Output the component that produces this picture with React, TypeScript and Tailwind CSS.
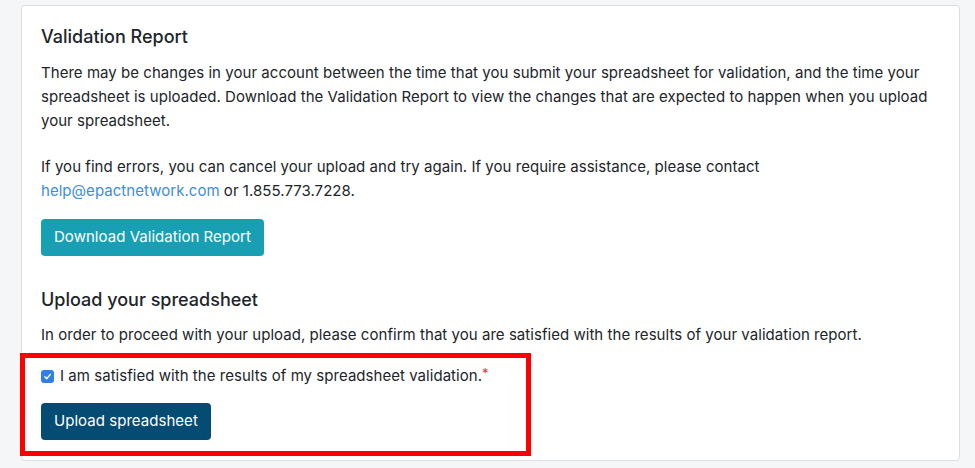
export default function App() {
  return (
    <div className="min-h-[468px] bg-[#f5f6f8] pt-[5px] pl-[21px] pr-[15px] font-['Inter','Liberation_Sans',Arial,sans-serif] text-[#212529]">
      <div className="w-[939px] h-[456px] rounded-[4px] border border-[#dcdee2] bg-white pt-[18px] pl-[19px] pr-[20px]">
        <h3 className="text-[18px] leading-[26px] font-medium">Validation Report</h3>
        <p className="mt-[11px] text-[15px] leading-[24px] tracking-[0.04px]">
          There may be changes in your account between the time that you submit your spreadsheet for validation, and the time your
          spreadsheet is uploaded. Download the Validation Report to view the changes that are expected to happen when you upload
          your spreadsheet.
        </p>
        <p className="mt-[22px] text-[15px] leading-[24px] tracking-[0.04px]">
          If you find errors, you can cancel your upload and try again. If you require assistance, please contact
          <br />
          <a className="text-[#3d8edb]">help@epactnetwork.com</a> or 1.855.773.7228.
        </p>
        <button className="mt-[16px] h-[37px] px-[13px] rounded-[4px] bg-[#189fb4] text-white text-[15px] tracking-[0.04px]">
          Download Validation Report
        </button>
        <h3 className="mt-[31px] text-[18px] leading-[26px] font-medium">Upload your spreadsheet</h3>
        <p className="mt-[10px] text-[15px] leading-[24px] tracking-[0.04px]">
          In order to proceed with your upload, please confirm that you are satisfied with the results of your validation report.
        </p>
        <div className="relative mt-[17px]">
          <label className="flex items-center gap-[6px] h-[24px] text-[15px] tracking-[0.04px]">
            <span className="flex items-center justify-center w-[13px] h-[13px] rounded-[3px] bg-[#2f7fe8]">
              <svg width="9" height="9" viewBox="0 0 10 10" fill="none">
                <path d="M2 5.2 L4.2 7.4 L8.2 2.6" stroke="white" strokeWidth="1.6" strokeLinecap="round" strokeLinejoin="round" />
              </svg>
            </span>
            <span>
              I am satisfied with the results of my spreadsheet validation.<span className="relative top-[-3px] text-[#e3342f] text-[13px]">*</span>
            </span>
          </label>
          <button className="mt-[15px] h-[37px] px-[13px] rounded-[4px] bg-[#044c74] text-white text-[15px] tracking-[0.04px]">
            Upload spreadsheet
          </button>
          <div className="absolute left-[-21px] top-[-11px] w-[511px] h-[103px] border-[5px] border-[#ff0000]" />
        </div>
      </div>
    </div>
  );
}
